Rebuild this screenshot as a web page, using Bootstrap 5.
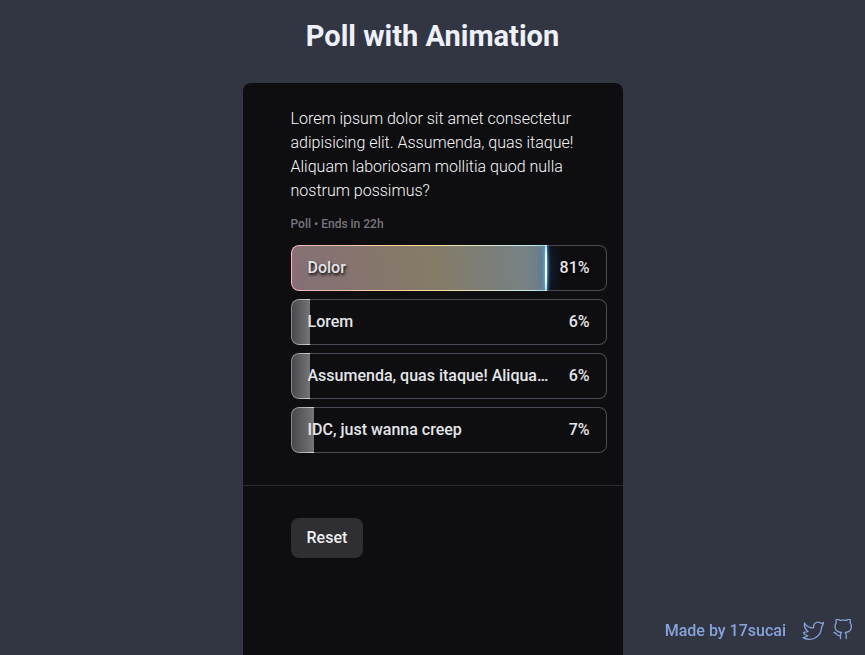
<!DOCTYPE html>
<html lang="en">
<head>
<meta charset="utf-8">
<meta name="viewport" content="width=device-width, initial-scale=1">
<title>Poll with Animation</title>
<link href="https://cdn.jsdelivr.net/npm/bootstrap@5.3.0/dist/css/bootstrap.min.css" rel="stylesheet">
<style>
  body { font-family: Roboto, "Liberation Sans", sans-serif; background: #323643; color: #eef0fa; }
  .page-title { font-size: 29px; font-weight: 700; line-height: 40px; padding: 16px 0 27px; }
  .poll { max-width: 380px; background: #0e0e10; border-radius: 8px 8px 0 0; }
  .poll-body { padding: 24px 16px 32px 48px; }
  .poll-foot { padding: 32px 16px 32px 48px; border-top: 1px solid #2b2a2f; }
  .question { font-size: 16px; font-weight: 300; line-height: 24px; padding-right: 16px; color: #f7f7f9; }
  .poll-meta { font-size: 12px; font-weight: 500; line-height: 18px; color: #77757e; margin: 12px 0; }
  .option { height: 46px; padding: 0 17px; border: 0; border-radius: 8px; background: none; color: #e4e5ea; font-size: 16px; font-weight: 500; box-shadow: inset 0 0 0 1px #4b4857; }
  .option-bar { border: 1px solid transparent; border-right: 0; border-radius: 8px 0 0 8px; box-sizing: content-box;
    background: linear-gradient(90deg, #49494b, #757578) padding-box, linear-gradient(90deg, #85858a, #d6d6da) border-box; }
  .option-lead .option-bar {
    background: linear-gradient(80deg, #866f76, #857b66 55%, #73838d) padding-box, linear-gradient(90deg, #ffb3c6, #ffd98c 50%, #b8eeff) border-box; }
  .option-lead .option-bar::after { content: ""; position: absolute; top: -4px; bottom: -4px; right: 0; width: 2px; border-radius: 50%; background: #fff; box-shadow: 0 0 3px 1px #5dbcff, 0 0 14px 1px #195e9b; }
  .option-lead { text-shadow: 1px 2px 3px #000; }
  .option-label { max-width: 242px; }
  .reset { height: 40px; padding: 0 16px; border: 0; border-radius: 8px; background: #2f2e33; color: #efeff1; font-size: 16px; font-weight: 500; }
  .credit { gap: 7px; padding: 0 11px 12px 0; font-weight: 500; line-height: 24px; }
  .credit a { color: #87a3dd; }
  .credit svg { display: block; fill: none; stroke: currentColor; stroke-width: 1.3; stroke-linecap: round; stroke-linejoin: round; }
</style>
<script src="https://cdn.jsdelivr.net/npm/bootstrap@5.3.0/dist/js/bootstrap.bundle.min.js" defer></script>
</head>
<body class="d-flex flex-column min-vh-100">
<h1 class="page-title text-center m-0">Poll with Animation</h1>
<main class="poll flex-grow-1 w-100 mx-auto">
  <section class="poll-body">
    <p class="question m-0">Lorem ipsum dolor sit amet consectetur adipisicing elit. Assumenda, quas itaque! Aliquam laboriosam mollitia quod nulla nostrum possimus?</p>
    <p class="poll-meta">Poll • Ends in 22h</p>
    <div class="d-grid gap-2">
      <button type="button" class="option option-lead position-relative overflow-hidden d-flex align-items-center justify-content-between w-100">
        <span class="option-bar position-absolute top-0 bottom-0 start-0" style="width:81%"></span>
        <span class="option-label position-relative text-truncate overflow-visible">Dolor</span><span class="position-relative">81%</span>
      </button>
      <button type="button" class="option position-relative overflow-hidden d-flex align-items-center justify-content-between w-100">
        <span class="option-bar position-absolute top-0 bottom-0 start-0" style="width:6%"></span>
        <span class="option-label position-relative text-truncate">Lorem</span><span class="position-relative">6%</span>
      </button>
      <button type="button" class="option position-relative overflow-hidden d-flex align-items-center justify-content-between w-100">
        <span class="option-bar position-absolute top-0 bottom-0 start-0" style="width:6%"></span>
        <span class="option-label position-relative text-truncate">Assumenda, quas itaque! Aliquam</span><span class="position-relative">6%</span>
      </button>
      <button type="button" class="option position-relative overflow-hidden d-flex align-items-center justify-content-between w-100">
        <span class="option-bar position-absolute top-0 bottom-0 start-0" style="width:7%"></span>
        <span class="option-label position-relative text-truncate">IDC, just wanna creep</span><span class="position-relative">7%</span>
      </button>
    </div>
  </section>
  <section class="poll-foot">
    <button type="button" class="reset">Reset</button>
  </section>
</main>
<footer class="credit position-fixed bottom-0 end-0 d-flex align-items-center">
  <a href="#" class="text-decoration-none me-2">Made by 17sucai</a>
  <a href="#" aria-label="Twitter"><svg width="24" height="24" viewBox="0 1 24 24"><path d="M22.500 4.500c-.8.4-1.700.8-2.600.9-2.200-2.300-7-1.200-7.400 3.300v1.200C8.500 10 5.500 8.300 3.500 5c-.6 3.500.5 6.300 3.500 8.500-1 .5-2.100.7-3.500.6-.7.100-1.100.6-1 .9.600 1.400 2.400 2.400 4.200 2.700-1.600 1.200-3.100 1.700-4.700 1.900 9 4.700 18-1 18.500-9.800C21.500 7.700 22.200 6 22.500 4.500z"/></svg></a>
  <a href="#" aria-label="GitHub"><svg width="22" height="24" viewBox="0 1 22 24"><path d="M8.500 20.500v-3.700c0-1 .4-1.700 1-2.300-4.200-.3-6.500-2.400-6.500-6 0-1.700.4-2.900 1.400-4-.4-1.200-.4-2.300 0-3.500 1.300 0 2.500.5 3.700 1.400 2-.4 4.200-.4 6.200 0C15.500 1.500 16.700 1 18 1c.4 1.200.4 2.300 0 3.500 1 1.100 1.400 2.300 1.400 4 0 3.600-2.300 5.700-6.200 6 .6.6 1 1.300 1 2.300v3.700M2 14.500c1.700.2 2.200 1 2.800 2 .6.900 1.700 1.300 3.700 1"/></svg></a>
</footer>
</body>
</html>
